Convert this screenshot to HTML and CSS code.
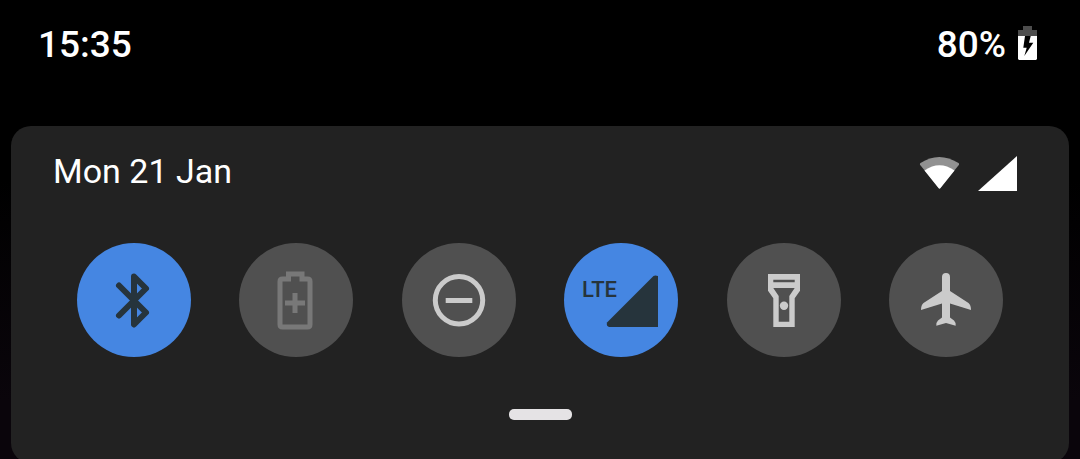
FILE: index.html
```html
<!DOCTYPE html>
<html lang="en">
<head>
    <meta charset="UTF-8">
    <meta name="viewport" content="width=device-width, initial-scale=1.0">
    <title>Quick settings</title>
    <link rel="stylesheet" href="styles.css">
</head>
<body>

<header class="status">
    <time class="clock">15:35</time>
    <div class="battery">
        <span>80%</span>
        <svg width="19" height="34" viewBox="0 0 19 34" aria-hidden="true">
            <path fill="#4d4d4d" d="M5 0h9v4h5v6H0V4h5z"/>
            <path fill="#fff" fill-rule="evenodd" d="M0 10h19v23l-1 1H1l-1-1zM7 10L5.300 21.700H8.700L6.300 30L15.300 16.700H11L12.700 10z"/>
        </svg>
    </div>
</header>

<main class="panel">
    <div class="info">
        <time class="date">Mon 21 Jan</time>
        <div class="signals">
            <svg width="40" height="34" viewBox="0 0 40 34" aria-hidden="true">
                <path fill="#919191" d="M1.500 7Q20-5 39.500 7Q40.500 8 39.800 9L20.500 33L1.200 9Q.500 8 1.500 7z"/>
                <path fill="#fff" d="M5.500 14.500Q20.500 4 35.500 14.500L21.500 32Q20.500 33 19.500 32z"/>
            </svg>
            <svg width="39" height="35" viewBox="0 0 39 35" aria-hidden="true">
                <path fill="#fff" d="M39 0v35H0z"/>
            </svg>
        </div>
    </div>

    <div class="tiles">
        <button type="button" class="tile on" aria-label="Bluetooth" aria-pressed="true">
            <svg viewBox="0 0 114 114">
                <path class="line thick" d="M42 42.500L69 69.500L57 81.500V33.500L69 45.500L42 72.500"/>
            </svg>
        </button>
        <button type="button" class="tile disabled" aria-label="Battery saver" disabled>
            <svg viewBox="0 0 114 114">
                <path class="line square" d="M49.500 36V31H63V36H68.500Q71 36 71 38.500V81.500Q71 84 68.500 84H43.500Q41 84 41 81.500V38.500Q41 36 43.500 36zM56 50V70M46 60H66"/>
            </svg>
        </button>
        <button type="button" class="tile" aria-label="Do not disturb" aria-pressed="false">
            <svg viewBox="0 0 114 114">
                <circle class="line" cx="57" cy="57.300" r="23.700"/>
                <path class="line square" d="M43.700 57.500H70.300"/>
            </svg>
        </button>
        <button type="button" class="tile on" aria-label="Mobile data" aria-pressed="true">
            <svg viewBox="0 0 114 114">
                <text class="network" x="18" y="54">LTE</text>
                <path class="fill" d="M89.500 33Q91 32 94 33V84H45Q42 83 43 79.500z"/>
            </svg>
        </button>
        <button type="button" class="tile" aria-label="Torch" aria-pressed="false">
            <svg viewBox="0 0 114 114">
                <path class="fill" fill-rule="evenodd" d="M41 31H73V47.700L67.700 55.300V84H46.300V55.300L41 47.700zM46.300 36.700V39.300H67.700V36.700zM46.300 45L51.700 53V78.700H62.300V53L67.700 45z"/>
                <circle class="fill" cx="57" cy="62.700" r="4.200"/>
            </svg>
        </button>
        <button type="button" class="tile" aria-label="Aeroplane mode" aria-pressed="false">
            <svg viewBox="0 0 114 114">
                <path class="fill" d="M53 34Q53 30 57 30Q61 30 61 34V48L79.500 60Q82 62 82 67L61 60.500V74.500L65 77.500Q67 79.500 66.700 82.700L57 80L47.300 82.700Q47 79.500 49 77.500L53 74.500V60.500L32 67Q32 62 34.500 60L53 48z"/>
            </svg>
        </button>
    </div>

    <button type="button" class="handle" aria-label="Expand quick settings"></button>
</main>

</body>
</html>
```

FILE: styles.css
```css
* {
    box-sizing: border-box;
}

body {
    margin: 0;
    background: linear-gradient(#000 180px, #0a050b 400px);
    color: #fff;
    font-family: Roboto, sans-serif;
    overflow: hidden;
}

svg {
    display: block;
}

.status {
    display: flex;
    justify-content: space-between;
    align-items: flex-start;
    padding: 23px 43px 59px 38px;
    font-size: 37px;
    font-weight: 500;
    line-height: 44px;
}

.battery {
    display: flex;
    gap: 12px;
}

.battery svg {
    margin-top: 3px;
}

.panel {
    margin: 0 11px;
    padding: 24px 0 43px;
    background: #222;
    border-radius: 20px;
}

.info {
    display: flex;
    justify-content: space-between;
    align-items: center;
    padding: 0 52px 0 42px;
}

.date {
    font-size: 34px;
    line-height: 42px;
}

.signals {
    display: flex;
    gap: 19px;
    margin-top: 4px;
}

.tiles {
    display: flex;
    justify-content: space-between;
    padding: 51px 66px 52px;
}

.tile {
    width: 114px;
    height: 114px;
    padding: 0;
    border: none;
    border-radius: 50%;
    background: #505050;
    color: #cbcbcb;
    cursor: pointer;
}

.tile.on {
    background: #4586e2;
    color: #26343c;
}

.tile.disabled {
    color: #787878;
    cursor: default;
}

.line {
    fill: none;
    stroke: currentColor;
    stroke-width: 5;
    stroke-linecap: round;
    stroke-linejoin: round;
}

.line.thick {
    stroke-width: 6;
}

.line.square {
    stroke-linecap: butt;
    stroke-linejoin: miter;
}

.fill {
    fill: currentColor;
}

.network {
    fill: currentColor;
    font-family: Roboto, sans-serif;
    font-size: 22px;
    font-weight: 500;
}

.handle {
    display: block;
    width: 63px;
    height: 11px;
    margin: 0 auto;
    padding: 0;
    border: none;
    border-radius: 5px;
    background: #e5e3e5;
    cursor: pointer;
}
```
